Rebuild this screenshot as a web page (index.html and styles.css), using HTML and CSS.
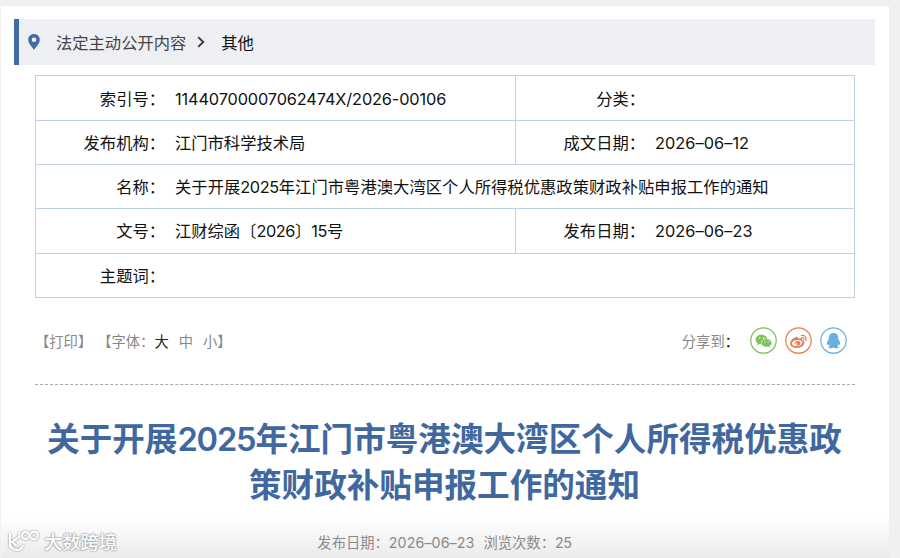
FILE: index.html
```html
<!DOCTYPE html>
<html lang="zh-CN">
	<head>
		<meta charset="utf-8">
		<title>关于开展2025年江门市粤港澳大湾区个人所得税优惠政策财政补贴申报工作的通知</title>
		<link rel="stylesheet" href="styles.css">
	</head>
	<body>
		<div class="content">
			<div class="crumb">
				<svg class="pin" viewBox="0 0 12 16"><path fill-rule="evenodd" d="M6 0C2.600 0 .2 2.500.2 5.700.2 9.500 4 12.500 6 16c2-3.500 5.800-6.500 5.800-10.300C11.800 2.500 9.400 0 6 0zm0 3.500a2.300 2.300 0 1 1 0 4.600 2.300 2.300 0 0 1 0-4.600z"/></svg>
				<a>法定主动公开内容</a>
				<svg class="arrow" viewBox="0 0 8 12"><path d="M1.200 1.200L6.300 6l-5.100 4.800"/></svg>
				<span class="current">其他</span>
			</div>

			<div class="info">
				<div class="row">
					<div class="cell left"><b>索引号：</b><span class="num code">11440700007062474X/2026-00106</span></div>
					<div class="cell right"><b>分类：</b></div>
				</div>
				<div class="row">
					<div class="cell left"><b>发布机构：</b><span>江门市科学技术局</span></div>
					<div class="cell right"><b>成文日期：</b><span class="num day">2026–06–12</span></div>
				</div>
				<div class="row">
					<div class="cell"><b>名称：</b><span class="name">关于开展<i class="num">2025</i>年江门市粤港澳大湾区个人所得税优惠政策财政补贴申报工作的通知</span></div>
				</div>
				<div class="row">
					<div class="cell left"><b>文号：</b><span>江财综函〔<i class="num">2026</i>〕<i class="num">15</i>号</span></div>
					<div class="cell right"><b>发布日期：</b><span class="num day">2026–06–23</span></div>
				</div>
				<div class="row">
					<div class="cell left"><b>主题词：</b></div>
				</div>
			</div>

			<div class="tools">
				<span class="print">【打印】</span>
				<span class="size">【字体：</span>
				<a class="on">大</a>
				<a>中</a>
				<a>小】</a>
				<div class="share">
					<span>分享到</span><em>：</em>
					<!-- 微信 -->
					<svg class="wechat" viewBox="0 0 27 27">
						<circle class="ring" cx="13.500" cy="13.500" r="12.700"/>
						<path d="M11.600 7.800c-3.300 0-6 2.100-6 4.800 0 1.500.8 2.800 2.200 3.700l-.6 2 2.300-1.200c.7.2 1.400.3 2.100.3 3.300 0 6-2.100 6-4.800s-2.700-4.800-6-4.800z"/>
						<path class="front" d="M16.500 11.700c-2.900 0-5.100 1.900-5.100 4.200s2.200 4.200 5.100 4.200c.7 0 1.300-.1 1.900-.3l2 1.100-.6-1.800c1.200-.8 1.900-1.900 1.900-3.200 0-2.300-2.300-4.200-5.200-4.200z"/>
						<g class="eye"><circle cx="9.700" cy="11" r=".75"/><circle cx="13.600" cy="11" r=".75"/><circle cx="14.900" cy="14.800" r=".6"/><circle cx="18.200" cy="14.800" r=".6"/></g>
					</svg>
					<!-- 微博 -->
					<svg class="weibo" viewBox="0 0 27 27">
						<circle class="ring" cx="13.500" cy="13.500" r="12.700"/>
						<path fill-rule="evenodd" d="M11.200 10.100c1.200-.4 2.100 0 1.900 1.600 2.300-.9 4.400-.6 3.900 1.500 1.600.5 2.400 1.300 2.400 2.500 0 2.700-3.400 5.200-7.600 5.200-3.700 0-6.600-1.700-6.600-4.500 0-2.300 3-5.600 6-6.300zM12 13c-3 .3-5.200 1.900-5 3.700s2.500 2.900 5.400 2.600 5.100-2 4.900-3.700S15 12.700 12 13z"/>
						<path fill-rule="evenodd" d="M12.200 14c2.100-.3 3.500.9 3.200 2.500s-2.100 2.500-3.700 2.200-2.400-1.500-2-2.700 1.300-1.800 2.500-2zm-.9 2.100a1 1 0 1 0 .1 2 1 1 0 0 0-.1-2z"/>
						<path class="wave" d="M16.600 10.700c1.600-.3 2.600.7 2.200 2.300M16.400 8.400c3.200-.6 5.300 1.700 4.500 4.900"/>
					</svg>
					<!-- QQ -->
					<svg class="qq" viewBox="0 0 27 27">
						<circle class="ring" cx="13.500" cy="13.500" r="12.700"/>
						<path d="M13.500 6c-3.100 0-4.800 2.100-4.700 4.800l-.1 1.400c-1.400 1.700-2.200 3.700-1.900 5.400.2.700.9.300 1.600-.6.200.8.600 1.600 1.300 2.300-.9.300-1.300.8-1.200 1.300.2.900 3.900.9 5 0 1.100.9 4.800.9 5 0 .1-.5-.3-1-1.200-1.300.7-.7 1.100-1.500 1.300-2.300.7.900 1.400 1.300 1.600.6.300-1.700-.5-3.700-1.900-5.400l-.1-1.400c.1-2.700-1.600-4.800-4.700-4.800z"/>
					</svg>
				</div>
			</div>

			<h1>关于开展<i class="num">2025</i>年江门市粤港澳大湾区个人所得税优惠政<br>策财政补贴申报工作的通知</h1>
			<p class="date">发布日期：<i class="num day">2026–06–23</i><span>浏览次数：<i class="num">25</i></span></p>
		</div>

		<div class="mark">
			<svg viewBox="0 0 34 24">
				<path d="M4 4v15M13 8l-7 5 5 4M4 15c2 8 11 8 13 1M13.500 3v6"/>
				<circle cx="19.500" cy="6.500" r="3.500"/><circle cx="28" cy="6.500" r="3.800"/>
			</svg>
			<span>大数跨境</span>
		</div>
	</body>
</html>
```
FILE: styles.css
```css
body{
	margin: 0;
	padding-top: 6px;
	box-sizing: border-box;
	height: 558px;
	overflow: hidden;
	background: #f0f0f0;
	font-family: "Noto Sans CJK SC", sans-serif;
	font-size: 16.3px;
	color: #111;
}

.content{
	box-sizing: border-box;
	width: 888px;
	height: 552px;
	margin-left: 1px;
	padding: 13px 14px 0 13px;
	background: linear-gradient(#fff 0, #fff 510px, #ebebeb 552px);
}

i, em{
	font-style: normal;
}

/*数字*/
.num{
	font-family: Inter, sans-serif;
	letter-spacing: -0.025em;
}

.code{
	letter-spacing: -0.007em;
}

.day{
	letter-spacing: 0.004em;
}

/*当前位置*/
.crumb{
	box-sizing: border-box;
	height: 46px;
	border-left: 5px solid #416da3;
	background: #edeff2;
	display: flex;
	align-items: center;
	padding-left: 9px;
	color: #444;
}

.pin{
	width: 12px;
	height: 16px;
	margin-right: 16px;
	fill: #416da3;
}

.arrow{
	width: 8px;
	height: 12px;
	margin: 0 16px 0 11px;
	fill: none;
	stroke: #333;
	stroke-width: 1.8;
}

.current{
	color: #111;
}

/*信息表*/
.info{
	width: 818px;
	margin: 10.4px 0 0 21px;
	border: 1px solid #bfd2e5;
	border-top: 0;
}

.row{
	box-sizing: border-box;
	height: 44.3px;
	border-top: 1px solid #bfd2e5;
	display: flex;
}

.cell{
	display: flex;
	align-items: center;
	white-space: nowrap;
	padding-bottom: 1px;
}

.cell b{
	box-sizing: border-box;
	width: 129px;
	margin-right: 10px;
	text-align: right;
	font-weight: 400;
}

.cell > .num{
	padding-top: 2px;
}

.name{
	letter-spacing: 0.05px;
}

.left{
	width: 479px;
}

.right{
	border-left: 1px solid #bfd2e5;
}

/*打印、字体、分享*/
.tools{
	width: 820px;
	height: 86px;
	margin-left: 21px;
	border-bottom: 1px dashed #aaa;
	display: flex;
	align-items: center;
	font-size: 14.3px;
	color: #888;
}

.print{
	margin-right: 5px;
}

.tools a{
	margin-right: 10px;
}

.tools .on{
	color: #222;
}

.share{
	display: flex;
	align-items: center;
	margin-left: auto;
	margin-right: 8px;
}

.share em{
	color: #222;
	margin-right: 3px;
	font-weight: 500;
}

.share svg{
	width: 27px;
	height: 27px;
	margin-left: 8px;
}

.ring{
	fill: none;
	stroke-width: 1.2;
}

.wechat{
	fill: #7cc15a;
}

.wechat .ring{
	stroke: #7cc15a;
}

.front{
	stroke: #fff;
	stroke-width: .6;
}

.eye{
	fill: #fff;
}

.weibo{
	fill: #e9794e;
}

.weibo .ring{
	stroke: #e9794e;
}

.wave{
	fill: none;
	stroke: #e9794e;
	stroke-width: 1.2;
	stroke-linecap: round;
}

.qq{
	fill: #67b0e1;
}

.qq .ring{
	stroke: #67b0e1;
}

/*标题*/
h1{
	margin: 29px 0 0;
	text-align: center;
	white-space: nowrap;
	font-size: 32.6px;
	line-height: 46px;
	font-weight: 700;
	color: #40689f;
}

/*行高归零，避免撑高第一行*/
h1 .num{
	font-weight: 600;
	letter-spacing: -0.035em;
	line-height: 0;
}

.date{
	margin: 25px 0 0;
	text-align: center;
	font-size: 14.3px;
	line-height: 21px;
	color: #8a8a8a;
}

.date span{
	margin-left: 9px;
}

/*左下角水印*/
.mark{
	position: absolute;
	left: 6px;
	top: 528px;
	display: flex;
	align-items: center;
	font-size: 18.3px;
	line-height: 26px;
	font-weight: 500;
	color: #fff;
	text-shadow: 0 0 2px #888, 0 0 2px #999;
}

.mark svg{
	width: 34px;
	height: 24px;
	margin-right: 4px;
	fill: none;
	stroke: #fff;
	stroke-width: 2;
	filter: drop-shadow(0 0 1px #888);
}
```
